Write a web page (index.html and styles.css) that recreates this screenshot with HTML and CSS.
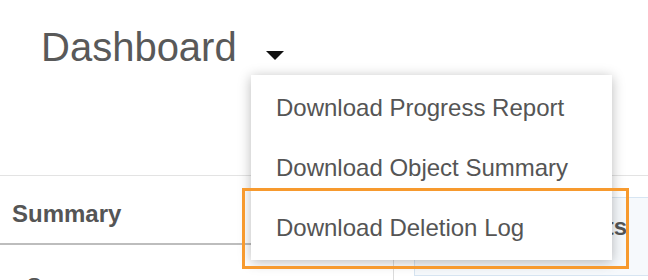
FILE: index.html
```html
<!DOCTYPE html>
<html>
<head>
    <link rel="stylesheet" href="styles.css">
</head>
<body>
    <header class="page-header">
        <h1 class="title">Dashboard</h1>
        <span class="caret"></span>
    </header>

    <ul class="menu">
        <li class="menu-item">Download Progress Report</li>
        <li class="menu-item">Download Object Summary</li>
        <li class="menu-item">Download Deletion Log</li>
    </ul>
    <div class="highlight"></div>

    <main class="content">
        <section class="summary">
            <div class="summary-head">Summary</div>
            <div class="summary-row">Source</div>
        </section>
        <section class="stats">
            <div class="stats-card">
                <h2 class="stats-title">Deletion Counts</h2>
            </div>
        </section>
    </main>
</body>
</html>
```

FILE: styles.css
```css
body {
    margin: 0;
    background: #fff;
    font-family: "Liberation Sans", Arial, sans-serif;
    color: #555;
    overflow: hidden;
    height: 280px;
}
.page-header {
    display: flex;
    align-items: flex-start;
    height: 176px;
    box-sizing: border-box;
    padding: 27px 0 0 41px;
    border-bottom: 1px solid #e3e3e3;
}
.title {
    margin: 0;
    font-size: 40px;
    line-height: 40px;
    font-weight: normal;
    color: #595959;
}
.caret {
    margin: 24px 0 0 29px;
    width: 0;
    height: 0;
    border-left: 9px solid transparent;
    border-right: 9px solid transparent;
    border-top: 9px solid #111;
}
.menu {
    position: absolute;
    left: 251px;
    top: 75px;
    width: 361px;
    height: 185px;
    box-sizing: border-box;
    margin: 0;
    padding: 3px 0 2px;
    list-style: none;
    background: #fff;
    box-shadow: 0 2px 12px rgba(0, 0, 0, 0.28);
    z-index: 1;
}
.menu-item {
    height: 60px;
    line-height: 60px;
    padding-left: 25px;
    font-size: 24px;
    color: #555;
}
.highlight {
    position: absolute;
    left: 242px;
    top: 188px;
    width: 387px;
    height: 81px;
    box-sizing: border-box;
    border: 3px solid #f79a2e;
    z-index: 2;
}
.content {
    display: flex;
    height: 104px;
    overflow: hidden;
}
.summary {
    width: 394px;
    flex-shrink: 0;
    box-sizing: border-box;
    border-right: 1px solid #dcdcdc;
}
.summary-head {
    height: 43px;
    padding: 24px 12px 0;
    font-size: 24px;
    line-height: 28px;
    font-weight: bold;
    border-bottom: 2px solid #bdbdbd;
}
.summary-row {
    padding: 28px 0 0 26px;
    font-size: 24px;
    line-height: 28px;
}
.stats {
    flex: 1;
    padding: 21px 0 0 20px;
}
.stats-card {
    height: 79px;
    box-sizing: border-box;
    border: 1px solid #d7e5f2;
    border-right: none;
    background: #f6f9fc;
}
.stats-title {
    margin: 0;
    padding: 15px 0 0 28px;
    font-size: 24px;
    line-height: 28px;
    font-weight: bold;
    color: #555;
    white-space: nowrap;
}
```
